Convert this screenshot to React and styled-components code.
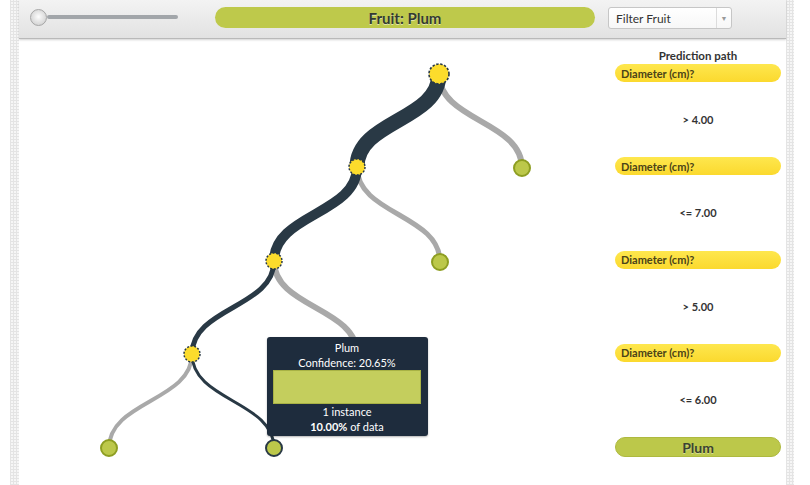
import styled, { createGlobalStyle } from "styled-components"

const GlobalStyle = createGlobalStyle`
    html, body {
        margin: 0;
        height: 100%;
        background: #fff;
    }
    body {
        font-family: Lato, "Open Sans", "Liberation Sans", sans-serif;
        color: #333;
    }
    #root {
        height: 100%;
    }
`

const Page = styled.div`
    display: flex;
    height: 485px;
    width: 810px;
    overflow: hidden;
`
const Strip = styled.div`
    width: ${p => p.$w}px;
    margin-left: ${p => p.$ml || 0}px;
    background-color: #f6f6f6;
    background-image:
        repeating-linear-gradient(90deg, #e4e4e4 0 1px, transparent 1px 3px),
        repeating-linear-gradient(0deg, #e4e4e4 0 1px, transparent 1px 3px);
`
const Main = styled.div`
    width: 767px;
    display: flex;
    flex-direction: column;
    background: #fff;
`
const Header = styled.div`
    height: 39px;
    display: flex;
    align-items: flex-start;
    padding: 7px 0 0 11px;
    box-sizing: border-box;
    background: linear-gradient(#f3f3f3, #e2e2e2);
    border-bottom: 1px solid #b9b9b9;
    box-shadow: 0 1px 2px rgba(0,0,0,0.18);
    position: relative;
    z-index: 1;
`
const Slider = styled.div`
    width: 148px;
    height: 20px;
    display: flex;
    align-items: center;
`
const Knob = styled.div`
    width: 15px;
    height: 15px;
    border-radius: 50%;
    border: 1px solid #a6a6a6;
    background: radial-gradient(circle at 50% 45%, #fdfdfd 0, #e4e4e4 45%, #c9c9c9 100%);
    flex: none;
`
const Track = styled.div`
    flex: 1;
    height: 4px;
    border-radius: 2px;
    background: #a2a6aa;
`
const TitlePill = styled.div`
    margin-left: 37px;
    width: 380px;
    height: 21px;
    border-radius: 11px;
    background: #bec94b;
    display: flex;
    align-items: center;
    justify-content: center;
    font-size: 15px;
    font-weight: 700;
    color: #333b32;
    text-shadow: 0 1px 0 rgba(255,255,255,0.55);
`
const Select = styled.div`
    margin-left: 13px;
    width: 124px;
    height: 22px;
    box-sizing: border-box;
    border: 1px solid #c6c6c6;
    border-radius: 3px;
    background: linear-gradient(#fff, #f7f7f7);
    display: flex;
    font-size: 12px;
    color: #333;
`
const SelectText = styled.div`
    flex: 1;
    padding-left: 7px;
    display: flex;
    align-items: center;
`
const SelectArrow = styled.div`
    width: 14px;
    border-left: 1px solid #dcdcdc;
    display: flex;
    align-items: center;
    justify-content: center;
    font-size: 7px;
    color: #999;
`
const Content = styled.div`
    flex: 1;
    display: flex;
`
const Canvas = styled.div`
    width: 596px;
    position: relative;
`
const Panel = styled.div`
    width: 166px;
    padding-top: 10px;
    display: flex;
    flex-direction: column;
`
const PanelTitle = styled.div`
    font-size: 11.5px;
    font-weight: 700;
    line-height: 14px;
    text-align: center;
    margin-bottom: 1px;
    color: #333;
`
const Question = styled.div`
    height: 18px;
    border-radius: 9px;
    background: linear-gradient(#fee74e, #fbd92e);
    display: flex;
    align-items: center;
    padding-left: 6px;
    font-size: 11px;
    font-weight: 700;
    color: #4a4318;
`
const Condition = styled.div`
    height: 75.25px;
    display: flex;
    align-items: center;
    justify-content: center;
    font-size: 11px;
    font-weight: 700;
    color: #333;
`
const Result = styled.div`
    height: 20px;
    box-sizing: border-box;
    border-radius: 10px;
    border: 1px solid #aeb93f;
    background: #bcc84a;
    display: flex;
    align-items: center;
    justify-content: center;
    font-size: 14px;
    font-weight: 700;
    color: #3b4330;
    text-shadow: 0 1px 0 rgba(255,255,255,0.4);
`
const Tooltip = styled.div`
    position: absolute;
    left: 248px;
    top: 298px;
    width: 161px;
    box-sizing: border-box;
    padding: 3px 7px 2px 6px;
    background: #1e2c3d;
    border-radius: 3px;
    color: #fff;
    font-size: 11px;
    line-height: 15px;
    text-align: center;
    box-shadow: 0 1px 2px rgba(0,0,0,0.3);
`
const TipBar = styled.div`
    height: 34px;
    box-sizing: border-box;
    background: #c4ce5d;
    border: 1px solid #a8b245;
`

const DARK = "#293945"
const GREY = "#a9a9a9"

const nodes = {
    root: [420, 35],
    n2: [338, 128],
    n3: [255, 222],
    n4: [173, 315],
    a: [503, 129],
    b: [421, 223],
    h: [338, 315],
    c: [90, 409],
    d: [255, 409],
}

const edges = [
    ["root", "a", GREY, 6],
    ["n2", "b", GREY, 5],
    ["n3", "h", GREY, 6],
    ["n4", "c", GREY, 4],
    ["root", "n2", DARK, 15],
    ["n2", "n3", DARK, 10],
    ["n3", "n4", DARK, 5],
    ["n4", "d", DARK, 3],
]

function curve([x1, y1], [x2, y2]) {
    const m = (y1 + y2) / 2
    return `M${x1},${y1} C${x1},${m} ${x2},${m} ${x2},${y2}`
}

function Tree() {
    return (
        <svg width="596" height="445" style={{ display: "block" }}>
            {edges.map(([f, t, c, w]) => (
                <path key={f + t} d={curve(nodes[f], nodes[t])} stroke={c} strokeWidth={w} fill="none" />
            ))}
            <circle cx={420} cy={35} r={10} fill="#fcdc2c" stroke={DARK} strokeWidth="1.6" strokeDasharray="2.4 1.6" />
            {["n2", "n3", "n4"].map(k => (
                <circle key={k} cx={nodes[k][0]} cy={nodes[k][1]} r={8} fill="#fcdc2c" stroke={DARK} strokeWidth="1.5" strokeDasharray="2 1.6" />
            ))}
            {["a", "b", "c"].map(k => (
                <circle key={k} cx={nodes[k][0]} cy={nodes[k][1]} r={8} fill="#bcc84a" stroke="#8e9e22" strokeWidth="2" />
            ))}
            <circle cx={255} cy={409} r={8} fill="#bcc84a" stroke={DARK} strokeWidth="2" />
        </svg>
    )
}

const path = ["> 4.00", "<= 7.00", "> 5.00", "<= 6.00"]

export default function App() {
    return (
        <>
            <GlobalStyle />
            <Page>
                <Strip $w={9} $ml={10} />
                <Main>
                    <Header>
                        <Slider>
                            <Knob />
                            <Track />
                        </Slider>
                        <TitlePill>Fruit: Plum</TitlePill>
                        <Select>
                            <SelectText>Filter Fruit</SelectText>
                            <SelectArrow>▼</SelectArrow>
                        </Select>
                    </Header>
                    <Content>
                        <Canvas>
                            <Tree />
                            <Tooltip>
                                <div>Plum</div>
                                <div>Confidence: 20.65%</div>
                                <TipBar />
                                <div>1 instance</div>
                                <div><b>10.00%</b> of data</div>
                            </Tooltip>
                        </Canvas>
                        <Panel>
                            <PanelTitle>Prediction path</PanelTitle>
                            {path.map(c => (
                                <div key={c}>
                                    <Question>Diameter (cm)?</Question>
                                    <Condition>{c}</Condition>
                                </div>
                            ))}
                            <Result>Plum</Result>
                        </Panel>
                    </Content>
                </Main>
                <Strip $w={8} />
            </Page>
        </>
    )
}
